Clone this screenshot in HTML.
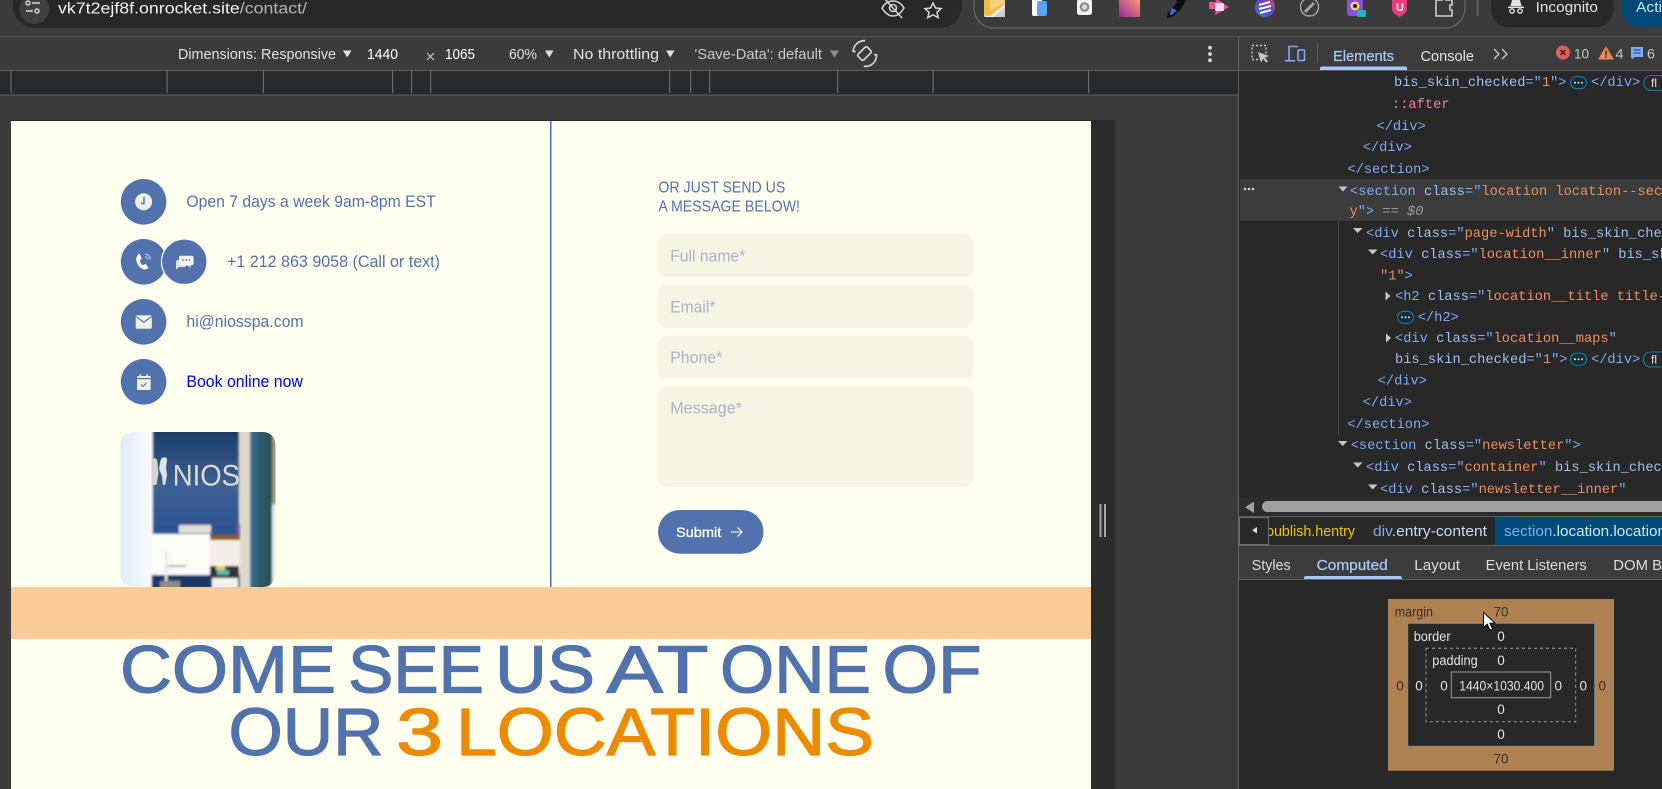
<!DOCTYPE html>
<html lang="en"><head><meta charset="utf-8"><title>DevTools responsive view</title>
<style>
html,body{margin:0;padding:0;background:#3b3b3b;overflow:hidden}
svg{display:block;position:absolute;left:0;top:0}
text{font-family:"Liberation Sans",sans-serif;white-space:pre}
.m text,text.m{font-family:"Liberation Mono",monospace;font-size:13.7px;fill:#7cacf8}
.a{fill:#9fc0f0}.v{fill:#ee8f5c}
.g{fill:#9a9a9a}
.ui{fill:#dfe1e5;font-size:14.5px}
.bm{font-size:13.5px;fill:#e3e3e3;text-anchor:middle}
.bd{font-size:13.5px;fill:#3a3026;text-anchor:middle}
.pc{fill:#5272ae;font-size:16.5px}
.ph{fill:#aab4c8;font-size:16.5px}
.h{font-size:67px;fill:#5272ae;stroke:#5272ae;stroke-width:1.200}
.o{fill:#ec8a00;stroke:#ec8a00}
</style></head><body>
<svg xmlns="http://www.w3.org/2000/svg" width="1662" height="789" viewBox="0 0 1662 789">
<defs>
<clipPath id="photo"><path d="M132.400 432H263.400a12 12 0 0 1 12 12V575a12 12 0 0 1-12 12H132.400a12 12 0 0 1-12-12V444a12 12 0 0 1 12-12z"/></clipPath>
<linearGradient id="pale" x1="0" x2="1" y1="0" y2="0"><stop offset="0" stop-color="#dfe9f5"/><stop offset="1" stop-color="#fbfcfe"/></linearGradient>
<linearGradient id="wall" x1="0" x2="0" y1="0" y2="1"><stop offset="0" stop-color="#1b3c66"/><stop offset=".35" stop-color="#3d6094"/><stop offset=".7" stop-color="#2a4f90"/><stop offset="1" stop-color="#284d8c"/></linearGradient>
<linearGradient id="teal" x1="0" x2="1" y1="0" y2="0"><stop offset="0" stop-color="#3a6ea6"/><stop offset=".4" stop-color="#2c5b68"/><stop offset="1" stop-color="#254f50"/></linearGradient>
<linearGradient id="pk" x1="0" x2="1" y1="1" y2="0"><stop offset="0" stop-color="#a31fa5"/><stop offset="1" stop-color="#f7a86c"/></linearGradient>
<linearGradient id="orb" x1="0" x2="1" y1="1" y2="0"><stop offset="0" stop-color="#1f7fe8"/><stop offset=".6" stop-color="#6a3fc8"/><stop offset="1" stop-color="#f0703a"/></linearGradient>
<filter id="soft"><feGaussianBlur stdDeviation="1"/></filter>
<clipPath id="crumb"><rect x="1269" y="517" width="226" height="28"/></clipPath>
</defs>

<!-- base chrome -->
<rect width="1662" height="789" fill="#3b3b3b"/>
<rect y="36" width="1662" height="1" fill="#4e4e4e"/>
<path d="M13 0H962V6a22 22 0 0 1-22 22H35a22 22 0 0 1-22-22z" fill="#282828"/>
<circle cx="34.400" cy="9" r="15" fill="#3f3f3f"/>
<g stroke="#dcdcdc" stroke-width="1.400" fill="none"><circle cx="28" cy="3" r="2"/><path d="M32 3h8M26 11h7"/><circle cx="37" cy="11" r="2"/></g>
<text x="58" y="13.300" font-size="15.500" fill="#f1f1f1" textLength="249" lengthAdjust="spacingAndGlyphs">vk7t2ejf8f.onrocket.site<tspan fill="#b5b5b5">/contact/</tspan></text>
<!-- eye-off and star -->
<g fill="none" stroke="#cfcfcf" stroke-width="1.600"><path d="M882 8c3-5 7-7 11-7s8 2 11 7c-3 5-7 8-11 8s-8-3-11-8z"/><circle cx="893" cy="8" r="3.500"/><path d="M884 -2l18 20"/></g>
<path d="M933 3l2.500 5 5.500.6-4 3.700 1.200 5.300-5.200-2.800-5.200 2.800 1.200-5.300-4-3.700 5.500-.6z" fill="none" stroke="#d8d8d8" stroke-width="1.500"/>
<!-- extensions -->
<path d="M974 -4V8a20 20 0 0 0 20 20H1445a20 20 0 0 0 20-20V-4" fill="none" stroke="#6a6a6a" stroke-width="1.200"/>
<rect x="984" y="-3" width="21" height="20" rx="1.500" fill="#f0f0f0"/><path d="M984 -3h21v7l-15 12h-4a2 2 0 0 1-2-2z" fill="#f5b94a"/><path d="M990 -3h15v6l-15 8z" fill="#f8d27a"/><path d="M993 17l12-10v10z" fill="#cfcfcf"/>
<rect x="1032" y="-3" width="10" height="19" rx="2" fill="#fff"/><rect x="1037" y="1" width="10" height="15" rx="2" fill="#5ba2f4"/>
<rect x="1077" y="-1" width="15" height="16" rx="2.500" fill="#f1f1f1"/><circle cx="1084.500" cy="7" r="4.800" fill="#8a8a8a"/><circle cx="1084.500" cy="7" r="2.700" fill="#d8d8d8"/>
<rect x="1119" y="-3" width="21" height="20" rx="1" fill="url(#pk)"/>
<path d="M1181 -2l-5 6-8 9-1 5 5-1 9-8 4-6z" fill="#0c0c0c"/><path d="M1172 8l-2.500 6 1.500 1.500 6-5z" fill="#4466dd"/><circle cx="1181" cy="-1" r="5" fill="#0c0c0c"/>
<path d="M1209 2h7l-1-4 14 9-14 8 1-6h-7z" fill="#ee4fa6"/><rect x="1215" y="3" width="9" height="8" rx="1.500" fill="#fbdcec"/>
<circle cx="1265" cy="7" r="10" fill="url(#orb)"/><path d="M1259 5l11-3M1259 9l12-3M1260 13l11-3" stroke="#fff" stroke-width="2"/>
<circle cx="1309.500" cy="7" r="9" fill="none" stroke="#a9a9a9" stroke-width="1.400"/><path d="M1305 12l9-9" stroke="#a9a9a9" stroke-width="3"/>
<rect x="1347" y="-3" width="16" height="19" rx="3" fill="#8a4fe0"/><circle cx="1355" cy="6" r="4.500" fill="#f5d26a"/><circle cx="1355" cy="6" r="2" fill="#222"/><rect x="1357" y="10" width="9" height="7" rx="1.500" fill="#19b8b0"/>
<path d="M1392 -2h15v11c0 4-4 6-7.500 8-3.500-2-7.500-4-7.500-8z" fill="#e83e78"/><text x="1396" y="11" font-size="11" font-weight="bold" fill="#fff">U</text>
<path d="M1436 0h6v-2h4v2h6v5h-2v5h2v6h-16z" fill="none" stroke="#cdcdcd" stroke-width="1.600"/>
<rect x="1476.500" y="0" width="2" height="16" fill="#5e5e5e"/>
<path d="M1491 0h122.500v10a17 17 0 0 1-17 17H1508a17 17 0 0 1-17-17z" fill="#282828"/>
<g fill="#e3e3e3"><path d="M1512 0h8l1.500 6h-11z"/><rect x="1508" y="6.500" width="16" height="1.500"/></g><g fill="none" stroke="#e3e3e3" stroke-width="1.400"><circle cx="1512" cy="11" r="2.200"/><circle cx="1520" cy="11" r="2.200"/></g>
<text x="1535.600" y="12" font-size="14.500" fill="#e3e3e3" textLength="62.400" lengthAdjust="spacingAndGlyphs">Incognito</text>
<path d="M1621.500 0H1662V27H1638a17 17 0 0 1-16.500-17z" fill="#004a77"/>
<text x="1636" y="12" font-size="14.500" fill="#c2e7ff" textLength="26" lengthAdjust="spacingAndGlyphs">Acti</text>

<!-- device toolbar -->
<rect y="70" width="1238" height="1" fill="#5e5e5e"/>
<text class="ui" x="178" y="59" textLength="158" lengthAdjust="spacingAndGlyphs">Dimensions: Responsive</text>
<path d="M343 50.500h8.500l-4.250 7z" fill="#dfe1e5"/>
<text class="ui" x="367" y="59" style="fill:#fff" textLength="31" lengthAdjust="spacingAndGlyphs">1440</text>
<path d="M427 53l7 7M434 53l-7 7" stroke="#c7c7c7" stroke-width="1.200"/>
<text class="ui" x="445" y="59" style="fill:#fff" textLength="30" lengthAdjust="spacingAndGlyphs">1065</text>
<text class="ui" x="509" y="59" textLength="28" lengthAdjust="spacingAndGlyphs">60%</text>
<path d="M545 50.500h8.500l-4.250 7z" fill="#dfe1e5"/>
<text class="ui" x="573" y="59" textLength="86" lengthAdjust="spacingAndGlyphs">No throttling</text>
<path d="M666 50.500h8.500l-4.250 7z" fill="#dfe1e5"/>
<text class="ui" x="694.500" y="59" style="fill:#c9c9c9" textLength="127.500" lengthAdjust="spacingAndGlyphs">'Save-Data': default</text>
<path d="M830 50.500h9l-4.500 7z" fill="#8e8e8e"/>
<g transform="rotate(45 864.500 53.500)" fill="none" stroke="#d5d5d5" stroke-width="1.700"><rect x="860.500" y="47" width="8" height="13" rx="1.500"/><path d="M856 44a11 11 0 0 0-1 16l2-1.500M873 63a11 11 0 0 0 1-17l-2 1.500"/></g>
<g fill="#d8d8d8"><circle cx="1210" cy="47.700" r="1.900"/><circle cx="1210" cy="54" r="1.900"/><circle cx="1210" cy="60.300" r="1.900"/></g>

<!-- ruler -->
<rect y="71" width="1238" height="24" fill="#28292b"/>
<rect y="94.500" width="1238" height="1.200" fill="#5a5a5a"/>
<g fill="#6a6a6a"><rect x="10.500" y="71" width="1.200" height="22"/><rect x="166.500" y="71" width="1.200" height="22"/><rect x="262.800" y="71" width="1.200" height="22"/><rect x="392" y="71" width="1.200" height="22"/><rect x="411" y="71" width="1.200" height="22"/><rect x="430" y="71" width="1.200" height="22"/><rect x="669" y="71" width="1.200" height="22"/><rect x="690" y="71" width="1.200" height="22"/><rect x="709" y="71" width="1.200" height="22"/><rect x="837" y="71" width="1.200" height="22"/><rect x="932.500" y="71" width="1.200" height="22"/><rect x="1088" y="71" width="1.200" height="22"/></g>

<!-- page strip right -->
<rect x="1091" y="120" width="24" height="669" fill="#2b2b2b"/>
<rect x="1099.500" y="504" width="2" height="33" fill="#a8a8a8"/><rect x="1104" y="504" width="2" height="33" fill="#a8a8a8"/>

<!-- page -->
<rect x="11" y="120" width="1080" height="1" fill="#2b2b2b"/>
<rect x="11" y="121" width="1080" height="668" fill="#fffff0"/>
<rect x="550" y="121" width="1.500" height="466" fill="#5272ae"/>
<rect x="11" y="587" width="1080" height="52" fill="#f9cb97"/>

<!-- contact rows -->
<g fill="#5272ae"><circle cx="143.600" cy="201.800" r="22.800"/><circle cx="143.600" cy="261.800" r="22.800"/><circle cx="184.300" cy="261.800" r="22.800" stroke="#fffff0" stroke-width="1.200"/><circle cx="143.600" cy="321.800" r="22.800"/><circle cx="143.600" cy="381.800" r="22.800"/></g>
<text class="pc" x="186.400" y="207" textLength="249.300" lengthAdjust="spacingAndGlyphs">Open 7 days a week 9am-8pm EST</text>
<text class="pc" x="227" y="267" textLength="213" lengthAdjust="spacingAndGlyphs">+1 212 863 9058 (Call or text)</text>
<text class="pc" x="186.400" y="327" textLength="117.200" lengthAdjust="spacingAndGlyphs">hi@niosspa.com</text>
<text class="pc" x="186.400" y="387" style="fill:#0000ee" textLength="116.500" lengthAdjust="spacingAndGlyphs">Book online now</text>
<!-- clock -->
<circle cx="143.600" cy="201.800" r="8.500" fill="#eef0e6"/><path d="M144 196.800v6.700h-3" fill="none" stroke="#5272ae" stroke-width="1.400"/>
<!-- phone -->
<path fill="#f7f8ee" d="M139.500 253.500l2.300 5-2 2.300c.5 2 1.500 3.500 3 4.500l2.700-1.500 3 3.700c-1 1.500-3 2.500-5 2-4.200-1.500-7.300-6-7.300-10.500 0-2.500 1.500-4.500 3.300-5.500z"/>
<g fill="none" stroke="#c8cfdd" stroke-width="1"><path d="M145 254a6 6 0 0 1 5.500 5.500"/><path d="M145 256.800a3.200 3.200 0 0 1 2.900 2.900"/></g>
<!-- chat -->
<path d="M176 262a2 2 0 0 1 2-2h4v5h5l-2 2h-6l-3 2.500z" fill="#dfe3ea"/>
<rect x="179" y="255.700" width="14.500" height="9.500" rx="1.800" fill="#f4f5ea"/><path d="M187 265h4l-.5 2.500z" fill="#f4f5ea"/>
<g fill="#5272ae"><circle cx="183" cy="260" r=".9"/><circle cx="186.200" cy="260" r=".9"/><circle cx="189.400" cy="260" r=".9"/></g>
<!-- mail -->
<rect x="135.700" y="315.300" width="16.100" height="13.400" rx="1" fill="#eef0e6"/><path d="M136 316.300l7.800 6 7.800-6" fill="none" stroke="#5272ae" stroke-width="1.100"/>
<!-- calendar -->
<rect x="137" y="376" width="13.700" height="14" rx=".8" fill="#eef0e6"/><rect x="137" y="378" width="13.700" height="1.200" fill="#5272ae"/><rect x="139.500" y="374.300" width="1.500" height="3" fill="#eef0e6"/><rect x="146.500" y="374.300" width="1.500" height="3" fill="#eef0e6"/><path d="M141 384.500l2 2 3.500-3.500" fill="none" stroke="#5272ae" stroke-width="1.100"/>

<!-- photo -->
<g clip-path="url(#photo)"><g filter="url(#soft)">
<rect x="116" y="428" width="38" height="164" fill="url(#pale)"/>
<rect x="152.700" y="428" width="87" height="164" fill="url(#wall)"/>
<rect x="239" y="428" width="11" height="164" fill="#dcd8ca"/>
<rect x="250" y="428" width="24" height="164" fill="url(#teal)"/>
<rect x="272" y="428" width="6" height="76" fill="#99987f"/><rect x="272" y="504" width="6" height="88" fill="#e6e9e8"/>
<rect x="179" y="525" width="32" height="8" fill="#e1ded6"/>
<rect x="236" y="524" width="4" height="11" fill="#6b5a9c"/>
<rect x="210" y="535" width="30" height="5.500" fill="#8a5a2a"/>
<rect x="210" y="540" width="30" height="32" fill="#f3efe6"/>
<rect x="151.700" y="534" width="58.500" height="41" fill="#fbfbf7"/>
<rect x="151.700" y="575" width="88" height="16" fill="#1d3768"/>
<rect x="165" y="552" width="2.500" height="36" fill="#e7e7e4"/>
<rect x="160" y="581" width="20" height="8" fill="#8c8c88"/>
<path d="M168 566h18" stroke="#9b9b94" stroke-width="1.500"/>
<rect x="210" y="566" width="29" height="23" fill="#303030"/>
<rect x="217" y="570" width="12" height="5" fill="#58b8b8"/><rect x="216" y="566" width="9" height="4" fill="#e8c860"/>
<rect x="212" y="578" width="26" height="11" fill="#f2f2ee"/>
</g>
<path d="M152.500 459c3-2 5 0 5 4l1 10-2 12h-4z" fill="#d8d4c8"/><path d="M161 459c3-3 6-2 6 1l-1 8 1 7-2 10h-2l-1-9-3-7 1-6z" fill="#dde4ee" stroke="#8fa8cf" stroke-width=".5"/>
<text x="172.700" y="485.700" font-size="29.500" fill="#dcdcd4" textLength="67.300" lengthAdjust="spacingAndGlyphs">NIOS</text>
</g>

<!-- form -->
<text x="658.400" y="192.300" font-size="15.500" fill="#5272ae" textLength="126.900" lengthAdjust="spacingAndGlyphs">OR JUST SEND US</text>
<text x="658.400" y="211.300" font-size="15.500" fill="#5272ae" textLength="141.600" lengthAdjust="spacingAndGlyphs">A MESSAGE BELOW!</text>
<g fill="#f6f4e3"><rect x="658" y="233.700" width="315" height="43.300" rx="9"/><rect x="658" y="284.700" width="315" height="43.300" rx="9"/><rect x="658" y="335.700" width="315" height="43.300" rx="9"/><rect x="658" y="386.700" width="315" height="100.600" rx="9"/></g>
<text class="ph" x="670.200" y="261.500" textLength="75.100" lengthAdjust="spacingAndGlyphs">Full name*</text>
<text class="ph" x="670.200" y="312.500" textLength="45.200" lengthAdjust="spacingAndGlyphs">Email*</text>
<text class="ph" x="670.200" y="363" textLength="52.200" lengthAdjust="spacingAndGlyphs">Phone*</text>
<text class="ph" x="670.200" y="413.300" textLength="71.800" lengthAdjust="spacingAndGlyphs">Message*</text>
<rect x="658" y="510" width="105.500" height="43.700" rx="21.850" fill="#5272ae"/>
<text x="676" y="537" font-size="14" fill="#fffff0" stroke="#fffff0" stroke-width=".3" textLength="45.300" lengthAdjust="spacingAndGlyphs">Submit</text>
<path d="M731 532h11M737.500 527.500l4.500 4.500-4.500 4.500" fill="none" stroke="#fffff0" stroke-width="1.100"/>

<!-- heading -->
<g>
<text class="h" x="120" y="692.700" textLength="216" lengthAdjust="spacingAndGlyphs">COME</text>
<text class="h" x="348" y="692.700" textLength="136" lengthAdjust="spacingAndGlyphs">SEE</text>
<text class="h" x="495" y="692.700" textLength="100" lengthAdjust="spacingAndGlyphs">US</text>
<text class="h" x="606.500" y="692.700" textLength="102" lengthAdjust="spacingAndGlyphs">AT</text>
<text class="h" x="720" y="692.700" textLength="151" lengthAdjust="spacingAndGlyphs">ONE</text>
<text class="h" x="882.500" y="692.700" textLength="99" lengthAdjust="spacingAndGlyphs">OF</text>
<text class="h" x="228.500" y="755" textLength="155" lengthAdjust="spacingAndGlyphs">OUR</text>
<text class="h o" style="fill:#ec8a00;stroke:#ec8a00" x="396" y="755" textLength="47" lengthAdjust="spacingAndGlyphs">3</text>
<text class="h o" style="fill:#ec8a00;stroke:#ec8a00" x="456" y="755" textLength="418" lengthAdjust="spacingAndGlyphs">LOCATIONS</text>
</g>

<!-- devtools panel -->
<rect x="1238" y="37" width="424" height="752" fill="#3c3c3c"/>
<rect x="1238" y="36" width="1.200" height="753" fill="#5e5e5e"/>
<rect x="1239" y="71" width="423" height="426" fill="#282828"/>
<rect x="1239" y="70" width="423" height="1" fill="#5e5e5e"/>
<!-- top tabs -->
<g fill="none" stroke="#c7c7c7" stroke-width="1.400"><rect x="1252" y="45.500" width="14" height="14" stroke-dasharray="2 2"/></g>
<path d="M1258 52l11 4-4.500 1.500 3.500 4-1.500 1.300-3.500-4-2 4z" fill="#c7c7c7"/>
<g fill="none" stroke="#7cacf8" stroke-width="1.600"><path d="M1298 46.500h-9v14M1285 60.800h10"/><rect x="1298" y="50" width="6.500" height="10.500" rx="1"/></g>
<rect x="1317" y="43" width="1" height="20" fill="#5e5e5e"/>
<text x="1333" y="61" font-size="14.500" fill="#a8c7fa" stroke="#a8c7fa" stroke-width=".2" textLength="61" lengthAdjust="spacingAndGlyphs">Elements</text>
<path d="M1320 70v-1.500a2 2 0 0 1 2-2h83a2 2 0 0 1 2 2V70z" fill="#a8c7fa"/>
<text x="1420.500" y="61" font-size="14.500" fill="#e3e3e3" textLength="53.500" lengthAdjust="spacingAndGlyphs">Console</text>
<path d="M1494 49l5 5-5 5M1502 49l5 5-5 5" fill="none" stroke="#c7c7c7" stroke-width="1.400"/>
<circle cx="1563" cy="52.500" r="7" fill="#d9635c"/><path d="M1560.500 50l5 5M1565.500 50l-5 5" stroke="#3a2020" stroke-width="1.500"/>
<text x="1574" y="58.300" font-size="14" fill="#c7c7c7" textLength="15" lengthAdjust="spacingAndGlyphs">10</text>
<path d="M1606 46l8 13.500h-16z" fill="#e8894d"/><rect x="1605.300" y="50.500" width="1.500" height="5" fill="#3a2a20"/><rect x="1605.300" y="56.500" width="1.500" height="1.500" fill="#3a2a20"/>
<text x="1615.500" y="58.300" font-size="14" fill="#c7c7c7" textLength="8" lengthAdjust="spacingAndGlyphs">4</text>
<path d="M1631 47h12v10h-8l-3 2.500-1-2.500z" fill="#7cacf8"/><path d="M1633.500 50h7M1633.500 53h7" stroke="#26344e" stroke-width="1"/>
<text x="1647" y="58.300" font-size="14" fill="#c7c7c7" textLength="8" lengthAdjust="spacingAndGlyphs">6</text>

<!-- DOM tree -->
<rect x="1240" y="179" width="422" height="41.700" fill="#3c3c3c"/>
<g fill="#d0d0d0"><circle cx="1245" cy="189" r="1.300"/><circle cx="1249" cy="189" r="1.300"/><circle cx="1253" cy="189" r="1.300"/></g>
<rect x="1338" y="221" width="1" height="213" fill="#4a4a4a"/>
<g fill="#c7c7c7">
<path d="M1338.500 186.500h9l-4.500 5z"/><path d="M1353 228h9.500l-4.750 5z"/><path d="M1368 249.500h9.500l-4.750 5z"/>
<path d="M1385.500 291.500l5 4.500-5 4.500z"/><path d="M1386 333.500l5 4.500-5 4.500z"/>
<path d="M1338 441h9.500l-4.750 5z"/><path d="M1353 462.500h9.500l-4.750 5z"/><path d="M1368 484.500h9.500l-4.750 5z"/>
</g>
<g class="m" transform="translate(0 -.5)">
<text x="1394" y="86.700"><tspan class="a">bis_skin_checked</tspan>="<tspan class="v">1</tspan>"&gt;</text>
<text x="1591" y="86.700">&lt;/div&gt;</text>
<text x="1392" y="108.500" style="fill:#f27ba6">::after</text>
<text x="1376.500" y="130.700">&lt;/div&gt;</text>
<text x="1362.700" y="151.700">&lt;/div&gt;</text>
<text x="1347.400" y="173.700">&lt;/section&gt;</text>
<text x="1350" y="195.700">&lt;section <tspan class="a">class</tspan>="<tspan class="v">location location--sec</tspan></text>
<text x="1349.500" y="215.700"><tspan class="v">y</tspan>"&gt; <tspan class="g">== </tspan><tspan class="g" font-style="italic">$0</tspan></text>
<text x="1366" y="237.300">&lt;div <tspan class="a">class</tspan>="<tspan class="v">page-width</tspan>" <tspan class="a">bis_skin_che</tspan></text>
<text x="1380" y="258.700">&lt;div <tspan class="a">class</tspan>="<tspan class="v">location__inner</tspan>" <tspan class="a">bis_sk</tspan></text>
<text x="1380" y="280"><tspan class="v">"1"</tspan>&gt;</text>
<text x="1395" y="300.700">&lt;h2 <tspan class="a">class</tspan>="<tspan class="v">location__title title-</tspan></text>
<text x="1417.700" y="321.300">&lt;/h2&gt;</text>
<text x="1395" y="342.700">&lt;div <tspan class="a">class</tspan>="<tspan class="v">location__maps</tspan>"</text>
<text x="1395" y="363.300"><tspan class="a">bis_skin_checked</tspan>="<tspan class="v">1</tspan>"&gt;</text>
<text x="1591" y="363.300">&lt;/div&gt;</text>
<text x="1377.700" y="385">&lt;/div&gt;</text>
<text x="1362.700" y="406.700">&lt;/div&gt;</text>
<text x="1347.300" y="428.300">&lt;/section&gt;</text>
<text x="1350.700" y="449.700">&lt;section <tspan class="a">class</tspan>="<tspan class="v">newsletter</tspan>"&gt;</text>
<text x="1366" y="471.300">&lt;div <tspan class="a">class</tspan>="<tspan class="v">container</tspan>" <tspan class="a">bis_skin_chec</tspan></text>
<text x="1380" y="493.300">&lt;div <tspan class="a">class</tspan>="<tspan class="v">newsletter__inner</tspan>"</text>
</g>
<!-- ellipsis pills -->
<g fill="#1c2a33" stroke="#0f7fb0" stroke-width="1.100"><rect x="1570.500" y="76.700" width="16" height="12" rx="6"/><rect x="1397.500" y="311.300" width="16" height="12" rx="6"/><rect x="1570.500" y="353.300" width="16" height="12" rx="6"/></g>
<g fill="#d8e4f0"><circle cx="1575" cy="82.700" r="1"/><circle cx="1578.500" cy="82.700" r="1"/><circle cx="1582" cy="82.700" r="1"/><circle cx="1402" cy="317.300" r="1"/><circle cx="1405.500" cy="317.300" r="1"/><circle cx="1409" cy="317.300" r="1"/><circle cx="1575" cy="359.300" r="1"/><circle cx="1578.500" cy="359.300" r="1"/><circle cx="1582" cy="359.300" r="1"/></g>
<!-- fl badges -->
<g fill="none" stroke="#0f7fb0" stroke-width="1.100"><rect x="1644" y="75.500" width="40" height="15" rx="7"/><rect x="1643.500" y="352" width="40" height="15" rx="7"/></g>
<text x="1651" y="87" font-size="12" font-family="Liberation Mono" fill="#e3e3e3">fl</text>
<text x="1651" y="363.500" font-size="12" font-family="Liberation Mono" fill="#e3e3e3">fl</text>
<!-- scrollbar -->
<rect x="1239" y="497" width="423" height="19" fill="#2c2c2c"/>
<path d="M1254 501.500v11.500l-9-5.750z" fill="#a0a0a0"/>
<rect x="1262" y="501" width="410" height="11" rx="5.500" fill="#9f9f9f"/>
<rect x="1239" y="516" width="423" height="1" fill="#5e5e5e"/>
<!-- breadcrumbs -->
<rect x="1239" y="517" width="423" height="28" fill="#282828"/>
<rect x="1239.500" y="517.500" width="29" height="27" fill="#282828" stroke="#6e6e6e"/>
<path d="M1257 527v6.500l-5-3.250z" fill="#d8d8d8"/>
<g clip-path="url(#crumb)"><text x="1266" y="536" font-size="14.500" fill="#e8c410" textLength="89" lengthAdjust="spacingAndGlyphs">publish.hentry</text></g>
<text x="1373" y="536" font-size="14.500" fill="#c9dcf5" textLength="114" lengthAdjust="spacingAndGlyphs"><tspan fill="#7cacf8">div</tspan>.entry-content</text>
<rect x="1495" y="517" width="167" height="28" fill="#004a77"/>
<text x="1504" y="536" font-size="14.500" fill="#cfe8fb" textLength="162" lengthAdjust="spacingAndGlyphs"><tspan fill="#7cacf8">section</tspan>.location.location</text>
<rect x="1239" y="545" width="423" height="1" fill="#5e5e5e"/>
<!-- lower tabs -->
<text x="1251.700" y="570" font-size="14.500" fill="#dcdcdc" textLength="39" lengthAdjust="spacingAndGlyphs">Styles</text>
<text x="1316.700" y="570" font-size="14.500" fill="#a8c7fa" stroke="#a8c7fa" stroke-width=".25" textLength="71" lengthAdjust="spacingAndGlyphs">Computed</text>
<text x="1414.300" y="570" font-size="14.500" fill="#dcdcdc" textLength="45.700" lengthAdjust="spacingAndGlyphs">Layout</text>
<text x="1485.700" y="570" font-size="14.500" fill="#dcdcdc" textLength="101" lengthAdjust="spacingAndGlyphs">Event Listeners</text>
<text x="1613.300" y="570" font-size="14.500" fill="#dcdcdc" textLength="48.700" lengthAdjust="spacingAndGlyphs">DOM B</text>
<path d="M1304 579.300v-1.300a2 2 0 0 1 2-2h94a2 2 0 0 1 2 2v1.300z" fill="#a8c7fa"/>
<rect x="1239" y="579" width="423" height="1" fill="#5e5e5e"/>
<rect x="1239" y="580" width="423" height="209" fill="#282828"/>
<!-- box model -->
<rect x="1388" y="599" width="226" height="171.700" fill="#ae8152"/>
<rect x="1407.700" y="623.300" width="187" height="123" fill="#282828" stroke="#8a8a8a"/>
<rect x="1426" y="648.300" width="149.700" height="73.400" fill="none" stroke="#9a9a9a" stroke-dasharray="3 3"/>
<rect x="1451.300" y="672" width="99.400" height="25.700" fill="none" stroke="#9a9a9a"/>
<text x="1394.700" y="616.300" font-size="13.500" fill="#3a3026" textLength="38.300" lengthAdjust="spacingAndGlyphs">margin</text>
<text class="bd" x="1501" y="616.300">70</text>
<text x="1413.700" y="641" font-size="13.500" fill="#e3e3e3" textLength="37" lengthAdjust="spacingAndGlyphs">border</text>
<text class="bm" x="1501" y="641">0</text>
<text x="1432.300" y="665" font-size="13.500" fill="#e3e3e3" textLength="45.400" lengthAdjust="spacingAndGlyphs">padding</text>
<text class="bm" x="1501" y="665">0</text>
<text x="1459.300" y="690.500" font-size="13.500" fill="#e3e3e3" textLength="84.700" lengthAdjust="spacingAndGlyphs">1440×1030.400</text>
<text class="bd" x="1400" y="690.500">0</text>
<text class="bm" x="1419" y="690.500">0</text>
<text class="bm" x="1444" y="690.500">0</text>
<text class="bm" x="1558.300" y="690.500">0</text>
<text class="bm" x="1583.300" y="690.500">0</text>
<text class="bd" x="1602.300" y="690.500">0</text>
<text class="bm" x="1501" y="714">0</text>
<text class="bm" x="1501" y="739">0</text>
<text class="bd" x="1501" y="763.500">70</text>
<!-- cursor -->
<path d="M1483.500 612.500v15l3.800-3.300 2.600 6 2.700-1.200-2.600-5.800 5-.2z" fill="#fff" stroke="#000" stroke-width="1"/>
</svg>
</body></html>
